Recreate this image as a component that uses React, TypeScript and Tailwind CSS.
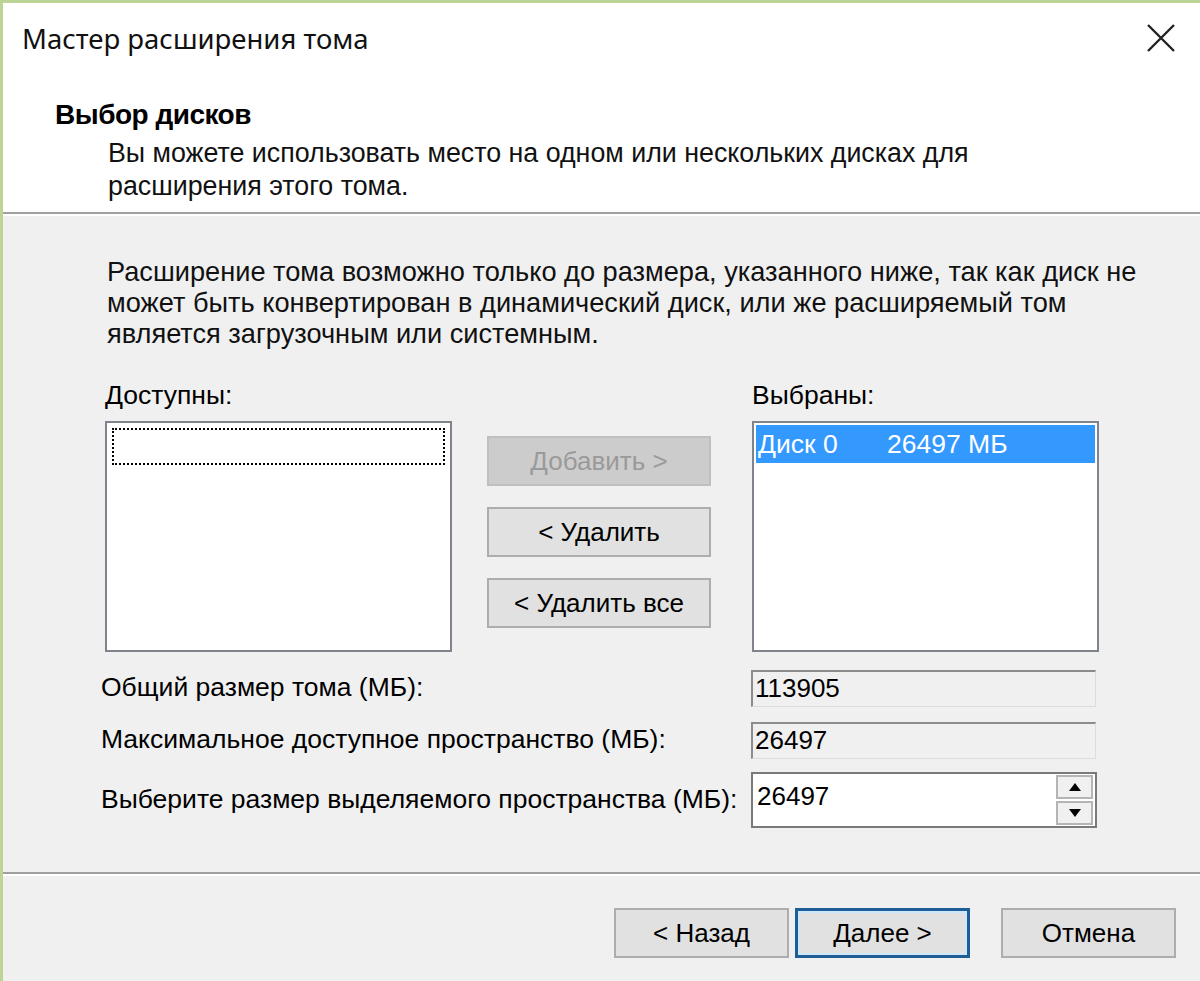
import React from "react";

function WinButton({
  children,
  disabled,
  def,
  className = "",
}: {
  children: React.ReactNode;
  disabled?: boolean;
  def?: boolean;
  className?: string;
}) {
  const base =
    "flex items-center justify-center h-[50px] text-[26px] leading-none";
  if (disabled)
    return (
      <div className={`${base} bg-[#cccccc] border-2 border-[#bfbfbf] text-[#9a9a9a] ${className}`}>
        {children}
      </div>
    );
  if (def)
    return (
      <div className={`${base} bg-[#e1e1e1] border-[3px] border-[#1e5d96] shadow-[inset_0_0_0_2px_#cde8fb] text-black ${className}`}>
        {children}
      </div>
    );
  return (
    <div className={`${base} bg-[#e1e1e1] border-2 border-[#adadad] text-black ${className}`}>
      {children}
    </div>
  );
}

export default function App() {
  return (
    <div className="w-[1200px] h-[981px] bg-[#f0f0f0] border-l-[3px] border-t-[3px] border-[#bcd595] flex flex-col overflow-hidden text-black font-['Liberation_Sans',Arial,sans-serif]">
      {/* Header */}
      <div className="h-[209px] bg-white flex flex-col">
        <div className="flex justify-between items-start pt-[19px] pl-[19px] pr-[24px]">
          <div className="text-[27.5px] leading-[34px] font-['Noto_Sans',sans-serif] text-[#111]">
            Мастер расширения тома
          </div>
          <svg width="30" height="30" viewBox="0 0 30 30" className="mt-[1px]">
            <path d="M2 2 L28 28 M28 2 L2 28" stroke="#222" strokeWidth="2.4" fill="none" />
          </svg>
        </div>
        <div className="pl-[52px] mt-[43px] text-[28px] leading-[32px] font-bold tracking-[-0.5px]">
          Выбор дисков
        </div>
        <div className="pl-[105px] mt-[6px] text-[26.8px] leading-[33px] text-[#111]">
          <div>Вы можете использовать место на одном или нескольких дисках для</div>
          <div>расширения этого тома.</div>
        </div>
      </div>
      <div className="h-[2px] bg-[#a0a0a0]" />
      <div className="h-[2px] bg-white" />

      {/* Body */}
      <div className="flex flex-col pl-[102px] pt-[40px]">
        <div className="text-[27.2px] leading-[31px] pl-[2px] text-[#111] whitespace-nowrap">
          <div>Расширение тома возможно только до размера, указанного ниже, так как диск не</div>
          <div>может быть конвертирован в динамический диск, или же расширяемый том</div>
          <div>является загрузочным или системным.</div>
        </div>

        <div className="flex mt-[31px]">
          {/* Available */}
          <div className="flex flex-col w-[347px]">
            <div className="text-[26.5px] leading-[30px] mb-[11px]">Доступны:</div>
            <div className="h-[231px] border-2 border-[#7f848c] bg-white p-[5px]">
              <div className="h-[37px] border-2 border-dotted border-black" />
            </div>
          </div>

          {/* Buttons */}
          <div className="flex flex-col gap-[21px] ml-[35px] mt-[56px] w-[224px]">
            <WinButton disabled>Добавить &gt;</WinButton>
            <WinButton>&lt; Удалить</WinButton>
            <WinButton>&lt; Удалить все</WinButton>
          </div>

          {/* Selected */}
          <div className="flex flex-col w-[347px] ml-[41px]">
            <div className="text-[26.5px] leading-[30px] mb-[11px]">Выбраны:</div>
            <div className="h-[231px] border-2 border-[#7f848c] bg-white p-[2px]">
              <div className="h-[38px] bg-[#3399ff] text-white text-[26.5px] leading-[38px] flex">
                <span className="pl-[2px] w-[131px]">Диск 0</span>
                <span>26497 МБ</span>
              </div>
            </div>
          </div>
        </div>

        {/* Fields */}
        <div className="flex flex-col mt-[17px] pr-[100px]">
          <div className="flex items-center h-[38px]">
            <div className="w-[650px] text-[26.5px] -ml-[4px]">Общий размер тома (МБ):</div>
            <div className="w-[345px] h-[37px] border-t-2 border-l-2 border-r border-b border-t-[#8c8c8c] border-l-[#8c8c8c] border-r-[#dcdcdc] border-b-[#dcdcdc] bg-[#f0f0f0] text-[26px] leading-[33px] pl-[2px]">
              113905
            </div>
          </div>
          <div className="flex items-center h-[38px] mt-[14px]">
            <div className="w-[650px] text-[26.5px] -ml-[4px]">Максимальное доступное пространство (МБ):</div>
            <div className="w-[345px] h-[37px] border-t-2 border-l-2 border-r border-b border-t-[#8c8c8c] border-l-[#8c8c8c] border-r-[#dcdcdc] border-b-[#dcdcdc] bg-[#f0f0f0] text-[26px] leading-[33px] pl-[2px]">
              26497
            </div>
          </div>
          <div className="flex items-center h-[56px] mt-[13px]">
            <div className="w-[650px] text-[26.5px] -ml-[4px]">Выберите размер выделяемого пространства (МБ):</div>
            <div className="w-[346px] h-[56px] border-2 border-[#7a7a7a] bg-white flex justify-between">
              <div className="text-[26px] leading-[44px] pl-[4px]">26497</div>
              <div className="flex flex-col gap-[2px] pt-[1px] pr-[2px]">
                <div className="w-[37px] h-[24px] border-2 border-[#b5b5b5] bg-[#f0f0f0] flex items-center justify-center">
                  <svg width="12" height="8" viewBox="0 0 12 8">
                    <path d="M6 0 L12 8 L0 8 Z" fill="#000" />
                  </svg>
                </div>
                <div className="w-[37px] h-[24px] border-2 border-[#b5b5b5] bg-[#f0f0f0] flex items-center justify-center">
                  <svg width="12" height="8" viewBox="0 0 12 8">
                    <path d="M0 0 L12 0 L6 8 Z" fill="#000" />
                  </svg>
                </div>
              </div>
            </div>
          </div>
        </div>
      </div>

      {/* Footer */}
      <div className="mt-auto">
        <div className="h-[2px] bg-[#a0a0a0]" />
        <div className="h-[2px] bg-white" />
        <div className="flex justify-end pr-[24px] pt-[32px] pb-[23px]">
          <WinButton className="w-[175px]">&lt; Назад</WinButton>
          <WinButton def className="w-[175px] ml-[6px]">Далее &gt;</WinButton>
          <WinButton className="w-[175px] ml-[31px]">Отмена</WinButton>
        </div>
      </div>
    </div>
  );
}
